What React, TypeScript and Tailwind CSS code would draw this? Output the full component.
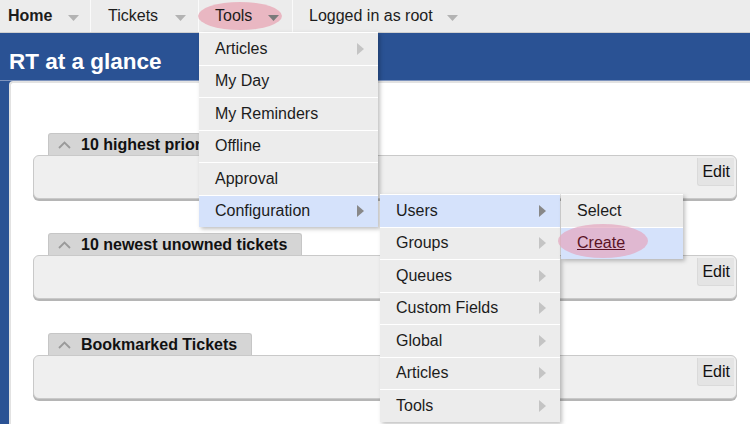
import type { ReactNode } from 'react'

const navItems = [
  { label: 'Home', bold: true, w: 'w-[91px]', pad: 'pl-[8px]', arrow: 'left-[68px]' },
  { label: 'Tickets', bold: false, w: 'w-[108px]', pad: 'pl-[17px]', arrow: 'left-[84px]' },
  { label: 'Tools', bold: false, w: 'w-[94px]', pad: 'pl-[16px]', arrow: 'left-[69px]', active: true },
  { label: 'Logged in as root', bold: false, w: 'w-[180px]', pad: 'pl-[16px]', arrow: 'left-[154px]' },
]

const toolsMenu = ['Articles', 'My Day', 'My Reminders', 'Offline', 'Approval', 'Configuration']
const configMenu = ['Users', 'Groups', 'Queues', 'Custom Fields', 'Global', 'Articles', 'Tools']

function DownArrow({ dark }: { dark?: boolean }) {
  return (
    <svg width="11" height="6" viewBox="0 0 11 6">
      <path d="M0 0 L11 0 L5.5 6 Z" fill={dark ? '#7a7a7a' : '#b3b3b3'} />
    </svg>
  )
}

function RightArrow({ dark }: { dark?: boolean }) {
  return (
    <svg width="7" height="12" viewBox="0 0 7 12">
      <path d="M0 0 L7 6 L0 12 Z" fill={dark ? '#888' : '#c4c4c4'} />
    </svg>
  )
}

function MenuItem({ label, arrow, active, children }: { label: string; arrow?: boolean; active?: boolean; children?: ReactNode }) {
  return (
    <div
      className={`relative flex h-[32.5px] items-center justify-between border-t border-white pl-[16px] pr-[14px] ${
        active ? 'bg-[#d5e2fb]' : 'bg-[#ececec]'
      }`}
    >
      {children ?? <span>{label}</span>}
      {arrow && <RightArrow dark={active} />}
    </div>
  )
}

function Portlet({ title, tabWidth }: { title: string; tabWidth: string }) {
  return (
    <div className="ml-[22px] mr-[13px]">
      <div
        className={`ml-[15px] flex h-[22px] ${tabWidth} items-center gap-[10px] overflow-hidden whitespace-nowrap rounded-t-[3px] border border-b-0 border-[#c6c6c6] bg-[#d5d5d5] pl-[9px] font-bold text-[16px] text-[#111]`}
      >
        <svg width="13" height="8" viewBox="0 0 13 8" className="shrink-0">
          <path d="M1 7 L6.5 1.5 L12 7" stroke="#9a9a9a" strokeWidth="1.8" fill="none" />
        </svg>
        <span>{title}</span>
      </div>
      <div className="flex h-[44px] justify-end rounded-[6px] border border-[#c9c9c9] bg-[#efefef] pt-[2px] shadow-[0_2px_0_#b5b5b5]">
        <div className="mr-[2px] flex h-[28px] items-center rounded-bl-[3px] border-b border-l border-[#dadada] bg-[#e4e4e4] px-[4px] text-[16px] text-[#111]">
          Edit
        </div>
      </div>
    </div>
  )
}

export default function App() {
  return (
    <div className="relative h-[424px] w-[750px] overflow-hidden bg-[#2a5294] font-['Liberation_Sans',Arial,sans-serif] text-[16px] text-[#1c1c1c]">
      {/* top nav */}
      <div className="flex h-[33px] border-b border-[#d0d0d0] bg-[#ececec]">
        {navItems.map((n, i) => (
          <div
            key={n.label}
            className={`relative flex h-full items-center ${n.w} ${n.pad} ${i < 3 ? 'border-r border-[#fafafa]' : ''} ${
              n.bold ? 'font-bold' : ''
            }`}
          >
            {n.active && <div className="absolute left-[-1px] top-[2px] h-[28px] w-[84px] rounded-[50%] bg-[#e9aab8]/80" />}
            <span className="relative">{n.label}</span>
            <span className={`absolute top-[15px] ${n.arrow}`}>
              <DownArrow dark={n.active} />
            </span>
          </div>
        ))}
      </div>

      {/* header */}
      <div className="flex h-[48px] items-center border-b border-[#7d93bd] pl-[9px] pt-[11px] text-[22.5px] font-bold text-white">
        RT at a glance
      </div>

      {/* content */}
      <div className="ml-[9px] h-[400px] rounded-tl-[4px] border-l-2 border-t-2 border-[#e2e2e2] bg-white pt-[50px]">
        <Portlet title="10 highest priority tickets I own" tabWidth="w-[153px]" />
        <div className="h-[34px]" />
        <Portlet title="10 newest unowned tickets" tabWidth="w-[254px]" />
        <div className="h-[34px]" />
        <Portlet title="Bookmarked Tickets" tabWidth="w-[204px]" />
      </div>

      {/* Tools dropdown */}
      <div className="absolute left-[199px] top-[32px] w-[179px] shadow-[2px_2px_4px_rgba(0,0,0,0.25)]">
        {toolsMenu.map((m) => (
          <MenuItem key={m} label={m} arrow={m === 'Articles' || m === 'Configuration'} active={m === 'Configuration'} />
        ))}
      </div>

      {/* Configuration submenu */}
      <div className="absolute left-[380px] top-[194px] w-[180px] shadow-[2px_2px_4px_rgba(0,0,0,0.25)]">
        {configMenu.map((m) => (
          <MenuItem key={m} label={m} arrow active={m === 'Users'} />
        ))}
      </div>

      {/* Users submenu */}
      <div className="absolute left-[561px] top-[194px] w-[122px] shadow-[2px_2px_4px_rgba(0,0,0,0.25)]">
        <MenuItem label="Select" />
        <MenuItem label="Create" active>
          <span className="relative">
            <span className="absolute left-[-19px] top-[-7px] h-[34px] w-[90px] rounded-[50%] bg-[#e4a6bf]/70" />
            <span className="relative text-[#5a1224] underline">Create</span>
          </span>
        </MenuItem>
      </div>
    </div>
  )
}
